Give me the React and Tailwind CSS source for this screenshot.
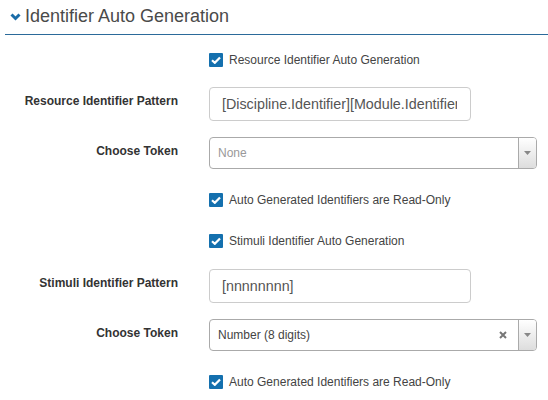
import React from 'react';

function Check({ label }) {
  return (
    <div className="flex items-center h-[14px]">
      <span className="w-[14px] h-[14px] bg-[#1470ae] rounded-[1px] flex items-center justify-center">
        <svg width="10" height="8" viewBox="0 0 10 8">
          <path d="M1 4.2 L3.8 6.8 L9 1.4" fill="none" stroke="#fff" strokeWidth="2.2" strokeLinejoin="miter" />
        </svg>
      </span>
      <span className="ml-[6px] text-[12px] text-[#444]">{label}</span>
    </div>
  );
}

function Row({ label, children, className }) {
  return (
    <div className={'flex items-start ' + (className || '')}>
      <div className="w-[178px] shrink-0 text-right font-bold text-[12px] leading-[17px] text-[#333] pt-[6px]">{label}</div>
      <div className="ml-[31px]">{children}</div>
    </div>
  );
}

function TextBox({ value }) {
  return (
    <input
      readOnly
      value={value}
      className="w-[262px] h-[34px] border border-[#ccc] rounded-[4px] pl-[12px] pr-[13px] text-[14.3px] text-[#555] outline-none"
    />
  );
}

function Select({ value, placeholder, clearable }) {
  return (
    <div className="w-[328px] h-[32px] border border-[#aaa] rounded-[4px] flex bg-white">
      <div className={'flex-1 flex items-center pl-[8px] text-[12px] ' + (value ? 'text-[#444]' : 'text-[#999]')}>
        {value || placeholder}
      </div>
      {clearable && (
        <div className="w-[30px] flex items-center justify-center">
          <svg width="8" height="8" viewBox="0 0 8 8">
            <path d="M1 1 L7 7 M7 1 L1 7" stroke="#777" strokeWidth="2" />
          </svg>
        </div>
      )}
      <div className="w-[18px] border-l border-[#aaa] rounded-r-[3px] bg-gradient-to-b from-white to-[#ddd] flex items-center justify-center">
        <svg width="7" height="4" viewBox="0 0 7 4">
          <path d="M0 0 L7 0 L3.5 4 Z" fill="#888" />
        </svg>
      </div>
    </div>
  );
}

export default function App() {
  return (
    <div className="w-[548px] h-[400px] bg-white font-['Liberation_Sans',Arial,sans-serif] overflow-hidden">
      <div className="ml-[5px] pt-[4px] pb-[6px] border-b border-[#2b6a9a] flex items-center">
        <svg width="11" height="8" viewBox="0 0 11 8" className="ml-[5px] mt-[2px]">
          <path d="M1.5 1.5 L5.5 5.5 L9.5 1.5" fill="none" stroke="#1a6ca8" strokeWidth="3" />
        </svg>
        <span className="ml-[4px] text-[18px] leading-[24px] text-[#4a4a4a]">Identifier Auto Generation</span>
      </div>

      <div className="pl-[209px] mt-[18px]">
        <Check label="Resource Identifier Auto Generation" />
      </div>
      <Row label="Resource Identifier Pattern" className="mt-[20px]">
        <TextBox value="[Discipline.Identifier][Module.Identifier]" />
      </Row>
      <Row label="Choose Token" className="mt-[16px]">
        <Select placeholder="None" />
      </Row>
      <div className="pl-[209px] mt-[24px]">
        <Check label="Auto Generated Identifiers are Read-Only" />
      </div>
      <div className="pl-[209px] mt-[27px]">
        <Check label="Stimuli Identifier Auto Generation" />
      </div>
      <Row label="Stimuli Identifier Pattern" className="mt-[21px]">
        <TextBox value="[nnnnnnnn]" />
      </Row>
      <Row label="Choose Token" className="mt-[16px]">
        <Select value="Number (8 digits)" clearable />
      </Row>
      <div className="pl-[209px] mt-[24px]">
        <Check label="Auto Generated Identifiers are Read-Only" />
      </div>
    </div>
  );
}
